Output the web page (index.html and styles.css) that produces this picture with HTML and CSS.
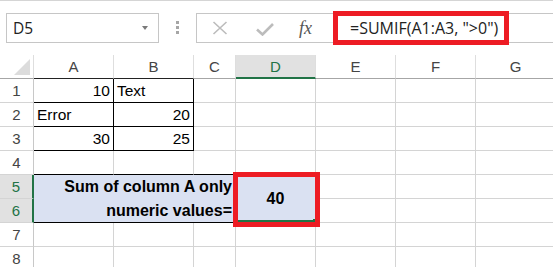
FILE: index.html
```html
<!DOCTYPE html>
<html lang="en">
<head>
    <meta charset="UTF-8">
    <title>SUMIF numeric values</title>
    <link rel="stylesheet" href="styles.css">
</head>
<body>
    <div class="topline"></div>
    <div class="bar">
        <div class="namebox"><span>D5</span><span class="caret"></span></div>
        <div class="dots"><i></i><i></i><i></i></div>
        <div class="fbar">
            <svg class="ico-x" width="16" height="14" viewBox="0 0 16 14">
                <path d="M1.5 1 L14.5 13 M14.5 1 L1.5 13" stroke="#bcbcbc" stroke-width="1.6" fill="none"/>
            </svg>
            <svg class="ico-ok" width="18" height="13" viewBox="0 0 18 13">
                <path d="M1 6.5 L6.5 11.5 L17 1" stroke="#bcbcbc" stroke-width="2.6" fill="none"/>
            </svg>
            <span class="fx">fx</span>
            <span class="formula">=SUMIF(A1:A3, "&gt;0")</span>
            <span class="mark"></span>
        </div>
    </div>
    <div class="sheet">
        <div class="c hd corner"></div>
        <div class="c hd hb">A</div>
        <div class="c hd hb">B</div>
        <div class="c hd">C</div>
        <div class="c hd selcol">D</div>
        <div class="c hd">E</div>
        <div class="c hd">F</div>
        <div class="c hd">G</div>

        <div class="c rh">1</div>
        <div class="c num br bb">10</div>
        <div class="c br bb">Text</div>
        <div class="c"></div><div class="c"></div><div class="c"></div><div class="c"></div><div class="c"></div>

        <div class="c rh">2</div>
        <div class="c br bb">Error</div>
        <div class="c num br bb">20</div>
        <div class="c"></div><div class="c"></div><div class="c"></div><div class="c"></div><div class="c"></div>

        <div class="c rh">3</div>
        <div class="c num br bb">30</div>
        <div class="c num br bb">25</div>
        <div class="c"></div><div class="c"></div><div class="c"></div><div class="c"></div><div class="c"></div>

        <div class="c rh">4</div>
        <div class="c bb"></div>
        <div class="c bb"></div>
        <div class="c bb"></div>
        <div class="c"></div><div class="c"></div><div class="c"></div><div class="c"></div>

        <div class="c rh selrow">5</div>
        <div class="c label">Sum of column A only<br>numeric values=</div>
        <div class="c total">40<span class="handle"></span><span class="mark"></span></div>
        <div class="c"></div><div class="c"></div><div class="c"></div>

        <div class="c rh selrow">6</div>
        <div class="c"></div><div class="c"></div><div class="c"></div>

        <div class="c rh">7</div>
        <div class="c"></div><div class="c"></div><div class="c"></div><div class="c"></div><div class="c"></div><div class="c"></div><div class="c"></div>

        <div class="c rh">8</div>
        <div class="c"></div><div class="c"></div><div class="c"></div><div class="c"></div><div class="c"></div><div class="c"></div><div class="c"></div>
    </div>
</body>
</html>
```

FILE: styles.css
```css
* {
    box-sizing: border-box;
}
body {
    margin: 0;
    width: 553px;
    height: 267px;
    overflow: hidden;
    background: #fff;
    font-family: "Liberation Sans", Arial, sans-serif;
    color: #000;
}
.topline {
    height: 1px;
    background: #d5d5d5;
}
.bar {
    display: flex;
    align-items: flex-start;
    height: 54px;
    padding: 12px 0 0 6px;
}
.namebox {
    width: 153px;
    height: 30px;
    border: 1px solid #c6c6c6;
    display: flex;
    align-items: center;
    justify-content: space-between;
    padding: 0 10px 0 6px;
    font-family: "Open Sans", sans-serif;
    font-size: 15.5px;
    color: #222;
}
.caret {
    width: 0;
    height: 0;
    border-left: 3.5px solid transparent;
    border-right: 3.5px solid transparent;
    border-top: 4px solid #7a7a7a;
}
.dots {
    display: flex;
    flex-direction: column;
    gap: 2px;
    margin: 8px 0 0 17px;
}
.dots i {
    width: 3px;
    height: 3px;
    background: #a6a6a6;
}
.fbar {
    position: relative;
    flex: 1;
    height: 30px;
    margin-left: 17px;
    border: 1px solid #c6c6c6;
    border-right: none;
    display: flex;
    align-items: center;
}
.ico-x {
    margin-left: 15px;
}
.ico-ok {
    margin-left: 28px;
    margin-top: 2px;
}
.fx {
    margin-left: 25px;
    font-family: "Liberation Serif", serif;
    font-style: italic;
    font-size: 18px;
    color: #555;
}
.formula {
    margin-left: 38px;
    font-family: "Open Sans", sans-serif;
    font-size: 16px;
    color: #222;
    white-space: nowrap;
}
.fbar .mark {
    position: absolute;
    left: 136px;
    top: -3px;
    width: 176px;
    height: 34px;
    border: 5px solid #ed1c24;
}
.sheet {
    display: grid;
    grid-template-columns: 34px 80px 80px 42px 80px 80px 80px 80px;
    grid-auto-rows: 24px;
}
.c {
    border-right: 1px solid #d4d4d4;
    border-bottom: 1px solid #d4d4d4;
    font-size: 15.5px;
    line-height: 24px;
    padding: 0 3px;
    white-space: nowrap;
    overflow: visible;
}
.hd {
    text-align: center;
    color: #444;
    border-right-color: #dedede;
    border-bottom-color: #a6a6a6;
    font-size: 15px;
}
.hb {
    border-bottom-color: #222;
}
.corner {
    position: relative;
}
.corner::after {
    content: "";
    position: absolute;
    right: 3px;
    bottom: 3px;
    width: 16px;
    height: 16px;
    background: #dcdcdc;
    clip-path: polygon(100% 0, 100% 100%, 0 100%);
}
.rh {
    text-align: center;
    color: #444;
    font-size: 15px;
    border-right-color: #c8c8c8;
}
.selcol {
    background: #e1e1e1;
    color: #217346;
    border-bottom: 2px solid #217346;
}
.selrow {
    background: #e1e1e1;
    color: #217346;
    border-right: 2px solid #217346;
}
.num {
    text-align: right;
}
.br {
    border-right-color: #000;
}
.bb {
    border-bottom-color: #000;
}
.label {
    grid-column: span 3;
    grid-row: span 2;
    background: #dae1f2;
    font-weight: bold;
    font-size: 16px;
    text-align: right;
    border-right-color: #000;
    border-bottom-color: #000;
}
.total {
    position: relative;
    grid-row: span 2;
    background: #dae1f2;
    font-weight: bold;
    font-size: 16px;
    display: flex;
    align-items: center;
    justify-content: center;
    box-shadow: inset 0 -2px 0 #217346;
}
.handle {
    position: absolute;
    right: -2px;
    bottom: -1px;
    width: 4px;
    height: 4px;
    background: #217346;
}
.total .mark {
    position: absolute;
    left: -3px;
    top: -3px;
    width: 87px;
    height: 55px;
    border: 5px solid #ed1c24;
}
```
